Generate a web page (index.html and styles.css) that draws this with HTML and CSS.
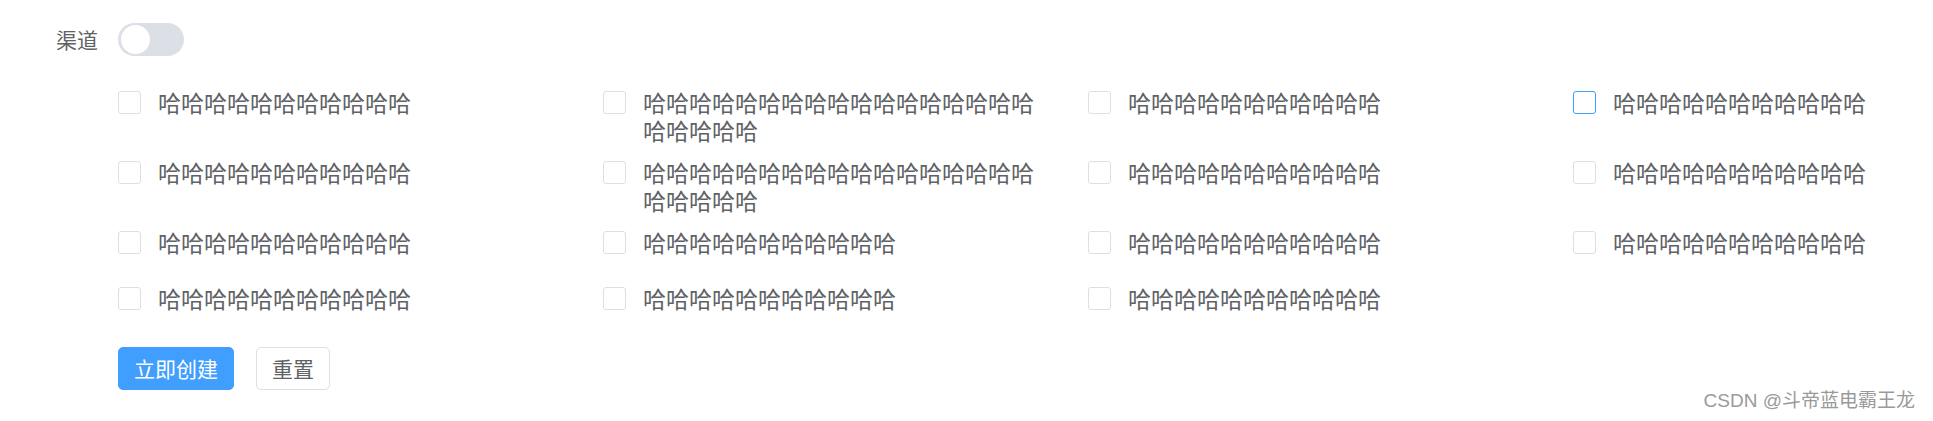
FILE: index.html
```html
<!DOCTYPE html>
<html lang="zh-CN">
<head>
  <meta charset="UTF-8">
  <title>渠道</title>
  <link rel="stylesheet" href="styles.css">
</head>
<body>

  <form class="form">
    <!-- 渠道开关 -->
    <div class="form-item">
      <label class="form-label">渠道</label>
      <div class="form-content">
        <span class="switch"><span class="switch-knob"></span></span>
      </div>
    </div>

    <!-- 多选项 -->
    <div class="form-item">
      <div class="form-content">
        <div class="check-group">
          <label class="check"><span class="check-box"></span><span class="check-text">哈哈哈哈哈哈哈哈哈哈哈</span></label>
          <label class="check"><span class="check-box"></span><span class="check-text">哈哈哈哈哈哈哈哈哈哈哈哈哈哈哈哈哈哈哈哈哈哈</span></label>
          <label class="check"><span class="check-box"></span><span class="check-text">哈哈哈哈哈哈哈哈哈哈哈</span></label>
          <label class="check"><span class="check-box hover"></span><span class="check-text">哈哈哈哈哈哈哈哈哈哈哈</span></label>

          <label class="check"><span class="check-box"></span><span class="check-text">哈哈哈哈哈哈哈哈哈哈哈</span></label>
          <label class="check"><span class="check-box"></span><span class="check-text">哈哈哈哈哈哈哈哈哈哈哈哈哈哈哈哈哈哈哈哈哈哈</span></label>
          <label class="check"><span class="check-box"></span><span class="check-text">哈哈哈哈哈哈哈哈哈哈哈</span></label>
          <label class="check"><span class="check-box"></span><span class="check-text">哈哈哈哈哈哈哈哈哈哈哈</span></label>

          <label class="check"><span class="check-box"></span><span class="check-text">哈哈哈哈哈哈哈哈哈哈哈</span></label>
          <label class="check"><span class="check-box"></span><span class="check-text">哈哈哈哈哈哈哈哈哈哈哈</span></label>
          <label class="check"><span class="check-box"></span><span class="check-text">哈哈哈哈哈哈哈哈哈哈哈</span></label>
          <label class="check"><span class="check-box"></span><span class="check-text">哈哈哈哈哈哈哈哈哈哈哈</span></label>

          <label class="check"><span class="check-box"></span><span class="check-text">哈哈哈哈哈哈哈哈哈哈哈</span></label>
          <label class="check"><span class="check-box"></span><span class="check-text">哈哈哈哈哈哈哈哈哈哈哈</span></label>
          <label class="check"><span class="check-box"></span><span class="check-text">哈哈哈哈哈哈哈哈哈哈哈</span></label>
        </div>
      </div>
    </div>

    <!-- 按钮 -->
    <div class="form-item">
      <div class="form-content">
        <button type="button" class="btn btn-primary">立即创建</button>
        <button type="button" class="btn">重置</button>
      </div>
    </div>
  </form>

  <div class="watermark">CSDN @斗帝蓝电霸王龙</div>

</body>
</html>
```

FILE: styles.css
```css
body {
  margin: 0;
  font-family: "Noto Sans CJK SC", "Liberation Sans", sans-serif;
  color: #606266;
  background: #fff;
  overflow: hidden;
}
.form {
  padding-top: 9px;
}
.form-item {
  display: flex;
  padding-left: 118px;
}
.form-item:first-child {
  padding-left: 0;
  height: 60px;
  align-items: center;
  margin-bottom: 21px;
}
.form-label {
  width: 98px;
  padding-right: 20px;
  text-align: right;
  font-size: 21px;
  line-height: 60px;
}
.form-content {
  flex: 1;
  display: flex;
  align-items: center;
  gap: 22px;
}

/* 开关 */
.switch {
  display: inline-block;
  position: relative;
  width: 66px;
  height: 33px;
  border-radius: 17px;
  background: #dcdfe6;
}
.switch-knob {
  position: absolute;
  top: 2px;
  left: 3px;
  width: 29px;
  height: 29px;
  border-radius: 50%;
  background: #fff;
}

/* 多选 */
.check-group {
  flex: 1;
  display: grid;
  grid-template-columns: 485px 485px 485px 1fr;
  row-gap: 14px;
  margin-bottom: 19px;
}
.check {
  display: flex;
  align-items: flex-start;
  min-height: 42px;
  padding-right: 50px;
  cursor: pointer;
}
.check-box {
  flex: none;
  box-sizing: border-box;
  width: 23px;
  height: 23px;
  margin-top: 1px;
  margin-right: 17px;
  border: 1px solid #dcdfe6;
  border-radius: 3px;
  background: #fff;
}
.check-box.hover {
  border-color: #409eff;
}
.check-text {
  margin-top: -2px;
  margin-bottom: 2px;
  font-size: 23px;
  line-height: 28px;
  word-break: break-all;
}

/* 按钮 */
.btn {
  box-sizing: border-box;
  height: 43px;
  padding: 0 15px;
  border: 1px solid #dcdfe6;
  border-radius: 5px;
  background: #fff;
  color: #606266;
  font-family: inherit;
  font-size: 21px;
  line-height: 1;
  cursor: pointer;
}
.btn-primary {
  background: #409eff;
  border-color: #409eff;
  color: #fff;
}

.watermark {
  position: absolute;
  right: 18px;
  bottom: 9px;
  font-family: "Liberation Sans", "Noto Sans CJK SC", sans-serif;
  font-size: 19px;
  color: #9a9a9a;
}
```
